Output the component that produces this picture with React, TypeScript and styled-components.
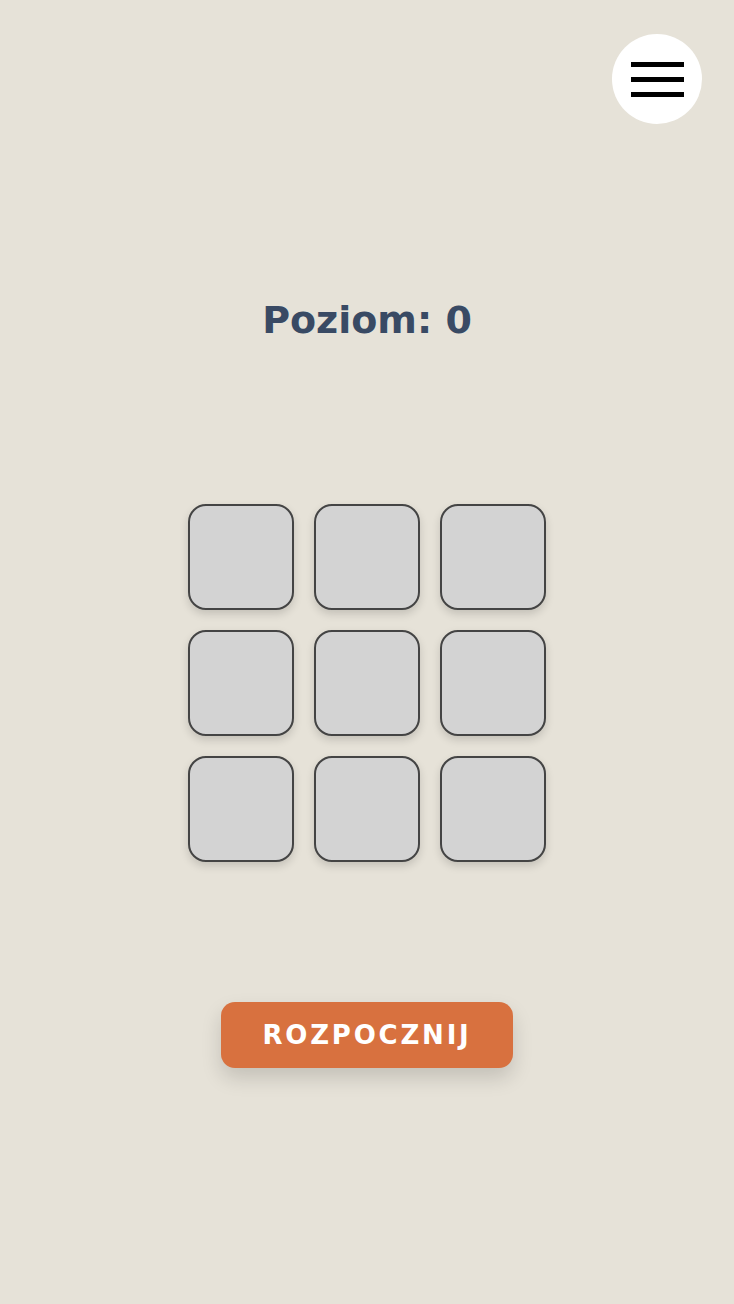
import React from "react";
import styled, { createGlobalStyle } from "styled-components";

const GlobalStyle = createGlobalStyle`
  html, body {
    margin: 0;
    padding: 0;
    background: #e6e2d8;
  }
  body {
    font-family: "DejaVu Sans", "Open Sans", sans-serif;
  }
`;

const Page = styled.div`
  min-height: 1304px;
  display: flex;
  flex-direction: column;
  align-items: center;
  padding: 34px 32px 0;
  box-sizing: border-box;
`;

const TopBar = styled.div`
  align-self: stretch;
  display: flex;
  justify-content: flex-end;
`;

const MenuButton = styled.button`
  width: 90px;
  height: 90px;
  border-radius: 50%;
  border: none;
  background: #ffffff;
  display: flex;
  flex-direction: column;
  align-items: center;
  justify-content: center;
  gap: 10px;
  padding: 0;
  cursor: pointer;
`;

const Bar = styled.span`
  display: block;
  width: 53px;
  height: 5px;
  background: #000;
`;

const Level = styled.h1`
  margin: 171px 0 0;
  font-size: 38px;
  line-height: 50px;
  font-weight: 700;
  color: #394a64;
`;

const Board = styled.div`
  margin-top: 159px;
  display: grid;
  grid-template-columns: repeat(3, 106px);
  grid-auto-rows: 106px;
  gap: 20px;
`;

const Tile = styled.div`
  box-sizing: border-box;
  border: 2px solid #444444;
  border-radius: 18px;
  background: #d3d3d3;
  box-shadow: 0 4px 8px rgba(0, 0, 0, 0.15);
`;

const StartButton = styled.button`
  margin-top: 140px;
  width: 292px;
  height: 66px;
  border: none;
  border-radius: 14px;
  background: #d8713f;
  color: #ffffff;
  font-family: "DejaVu Sans", "Open Sans", sans-serif;
  font-weight: 700;
  font-size: 26px;
  letter-spacing: 2.8px;
  box-shadow: 0 10px 20px rgba(0, 0, 0, 0.15);
  cursor: pointer;
`;

export default function App() {
  return (
    <>
      <GlobalStyle />
      <Page>
        <TopBar>
          <MenuButton aria-label="menu">
            <Bar />
            <Bar />
            <Bar />
          </MenuButton>
        </TopBar>
        <Level>Poziom: 0</Level>
        <Board>
          {Array.from({ length: 9 }).map((_, i) => (
            <Tile key={i} />
          ))}
        </Board>
        <StartButton>ROZPOCZNIJ</StartButton>
      </Page>
    </>
  );
}
